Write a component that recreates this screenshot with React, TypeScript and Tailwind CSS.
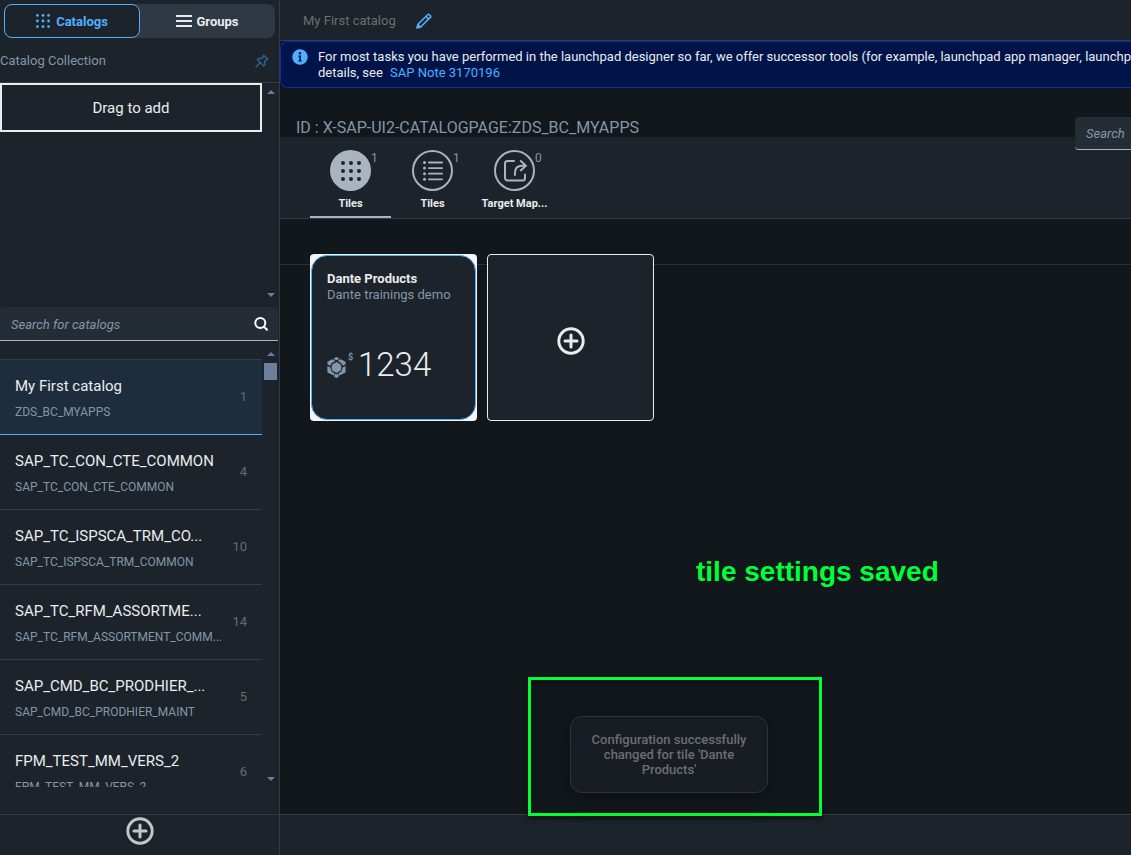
import React from "react";

type Catalog = { title: string; id: string; count: number };

const catalogs: Catalog[] = [
  { title: "My First catalog", id: "ZDS_BC_MYAPPS", count: 1 },
  { title: "SAP_TC_CON_CTE_COMMON", id: "SAP_TC_CON_CTE_COMMON", count: 4 },
  { title: "SAP_TC_ISPSCA_TRM_CO...", id: "SAP_TC_ISPSCA_TRM_COMMON", count: 10 },
  { title: "SAP_TC_RFM_ASSORTME...", id: "SAP_TC_RFM_ASSORTMENT_COMM...", count: 14 },
  { title: "SAP_CMD_BC_PRODHIER_...", id: "SAP_CMD_BC_PRODHIER_MAINT", count: 5 },
  { title: "FPM_TEST_MM_VERS_2", id: "FPM_TEST_MM_VERS_2", count: 6 },
];

const steps = [0, 1, 2];

function DotGrid({ className, r }: { className: string; r: number }) {
  return (
    <svg className={className} viewBox="0 0 20 20" fill="currentColor" aria-hidden="true">
      {steps.map((row) =>
        steps.map((col) => <circle key={`${row}${col}`} cx={2 + col * 8} cy={2 + row * 8} r={r} />)
      )}
    </svg>
  );
}

function ListIcon() {
  return (
    <svg className="size-5" viewBox="0 0 20 20" fill="currentColor" aria-hidden="true">
      {[0, 1, 2, 3].map((row) => (
        <g key={row}>
          <circle cx="1.5" cy={1.5 + row * 5.6} r="1.5" />
          <rect x="5" y={0.6 + row * 5.6} width="15" height="1.8" rx="0.9" />
        </g>
      ))}
    </svg>
  );
}

function ShareIcon() {
  return (
    <svg
      className="size-6"
      viewBox="0 0 24 24"
      fill="none"
      stroke="currentColor"
      strokeWidth="2"
      strokeLinecap="round"
      strokeLinejoin="round"
      aria-hidden="true"
    >
      <path d="M11 2H4.500a2.500 2.500 0 0 0-2.500 2.500v14.500a2.500 2.500 0 0 0 2.500 2.500h15a2.500 2.500 0 0 0 2.500-2.500v-3.500" />
      <path d="M17.800 2l5 4.700-5 4.700" />
      <path d="M22.500 6.700h-3.500c-4.500 0-7 2.800-7 7v2.300" />
    </svg>
  );
}

function PlusCircle({ className }: { className: string }) {
  return (
    <svg className={className} viewBox="0 0 28 28" fill="none" stroke="currentColor" aria-hidden="true">
      <circle cx="14" cy="14" r="12.200" strokeWidth="2.900" />
      <path d="M14 8v12M8 14h12" strokeWidth="3" strokeLinecap="round" />
    </svg>
  );
}

function PinIcon() {
  return (
    <svg
      className="size-3.5"
      viewBox="0 0 14 14"
      fill="none"
      stroke="currentColor"
      strokeWidth="1.500"
      strokeLinejoin="round"
      strokeLinecap="round"
      aria-hidden="true"
    >
      <path d="M8.600 1.200l4.200 4.200-1.300.5-2 2 .3 2.900-1.300 1L2.400 5.700l1-1.300 2.800.200 2-2z" />
      <path d="M5.300 8.700L1 13" />
    </svg>
  );
}

function PencilIcon() {
  return (
    <svg
      className="size-4"
      viewBox="0 0 16 16"
      fill="none"
      stroke="currentColor"
      strokeWidth="1.600"
      strokeLinejoin="round"
      aria-hidden="true"
    >
      <path d="M1.200 14.800l.8-3.500L11.900 1.500a.8.800 0 0 1 1.200 0l1.400 1.400a.8.800 0 0 1 0 1.200L4.700 14z" />
      <path d="M10 3.500l2.600 2.600" />
      <path d="M1.200 14.800l.8-3.300 2.500 2.500z" fill="currentColor" />
    </svg>
  );
}

function SearchIcon() {
  return (
    <svg className="size-3.5" viewBox="0 0 14 14" fill="none" stroke="currentColor" strokeWidth="2" aria-hidden="true">
      <circle cx="6.300" cy="6" r="5" />
      <path d="M9.900 9.600L13 12.800" strokeLinecap="round" />
    </svg>
  );
}

function CubeIcon() {
  return (
    <svg className="h-[21px] w-[19px]" viewBox="0 0 19 21" fill="currentColor" aria-hidden="true">
      <path d="M9.500 0l3.300 1.700-3.300 1.600-3.300-1.600z" />
      <path d="M5.200 2.200l3.300 1.900-3.700 2-1.400 2.600L.4 7.200V4.800z" />
      <path d="M13.800 2.200l-3.300 1.900 3.700 2 1.400 2.600 3-1.500V4.800z" />
      <path d="M9.500 5l4 2.300 1 3.200-1 3.200-4 2.300-4-2.300-1-3.200 1-3.200z" />
      <path d="M.4 9l3 1.600 1.200 3.900 2.800 1.700v2.600L.4 15.500z" />
      <path d="M18.600 9l-3 1.600-1.200 3.900-2.800 1.700v2.600l7-3.300z" />
      <path d="M8.300 16.800l1.200.7 1.200-.7 1.300 2.600L9.500 21 7 19.400z" />
    </svg>
  );
}

function Arrow({ down = false }: { down?: boolean }) {
  return (
    <svg className="h-1 w-2 text-[#6b7f9b]" viewBox="0 0 8 4" fill="currentColor" aria-hidden="true">
      <path d={down ? "M0 0h8L4 4z" : "M0 4h8L4 0z"} />
    </svg>
  );
}

function Sidebar() {
  return (
    <aside className="flex w-[280px] shrink-0 flex-col border-r border-[#333b45] bg-[#1d232a]">
      <div className="m-1 mb-0 flex h-[34px] rounded-lg bg-[#2f3943] text-[13px] font-bold">
        <button
          type="button"
          aria-pressed="true"
          className="flex w-[136px] items-center justify-center gap-1.5 rounded-lg border border-[#4db1ff] bg-[#1d232a] text-[#4db1ff]"
        >
          <DotGrid className="size-3.5" r={2} />
          <span className="pt-px">Catalogs</span>
        </button>
        <button type="button" aria-pressed="false" className="flex flex-1 items-center justify-center gap-1 text-[#eaecee]">
          <svg className="h-3 w-4" viewBox="0 0 16 12" fill="currentColor" aria-hidden="true">
            <path d="M0 0h16v2H0zM0 5h16v2H0zM0 10h16v2H0z" />
          </svg>
          <span className="pt-px">Groups</span>
        </button>
      </div>

      <div className="flex h-[45px] items-center justify-between border-b border-[#333b45] pt-0.5 pr-2.5">
        <h2 className="text-[13px] text-[#8396a8]">Catalog Collection</h2>
        <button type="button" aria-label="Pin" className="text-[#2f5f8a]">
          <PinIcon />
        </button>
      </div>

      <div className="flex h-[218px] shrink-0">
        <button
          type="button"
          className="h-[49px] w-[262px] border-2 border-[#eaecee] pt-0.5 text-[15px] text-[#eaecee]"
        >
          Drag to add
        </button>
        <div className="flex flex-1 flex-col items-center justify-between pt-[7px] pb-1">
          <Arrow />
          <Arrow down />
        </div>
      </div>

      <div className="mt-1.5 mr-px flex h-[34px] shrink-0 items-center rounded-t border-b border-[#a9b4be] bg-[#242d36] pr-2.5 pl-[11px]">
        <input
          type="text"
          aria-label="Search for catalogs"
          placeholder="Search for catalogs"
          className="min-w-0 flex-1 bg-transparent pt-0.5 text-[13px] italic outline-none placeholder:text-[#8396a8]"
        />
        <button type="button" aria-label="Search" className="text-white">
          <SearchIcon />
        </button>
      </div>

      <div className="mt-2.5 flex min-h-0 flex-1">
        <ul className="w-[262px] overflow-hidden pt-2">
          {catalogs.map((c, i) => (
            <li
              key={c.id}
              className={
                i === 0
                  ? "flex h-[76px] items-center border-t border-b border-t-[#333b45] border-b-[#4db1ff] bg-[#1d2d3e] px-[15px]"
                  : "flex h-[75px] items-center border-b border-[#333b45] px-[15px]"
              }
            >
              <div className="min-w-0 pt-0.5 whitespace-nowrap">
                <div className="text-[15px] leading-5 text-[#eaecee]">{c.title}</div>
                <div className="mt-2 text-[12px] leading-4 text-[#8396a8]">{c.id}</div>
              </div>
              <div className="flex-1 text-right text-[13px] text-[#666b70]">{c.count}</div>
            </li>
          ))}
        </ul>
        <div className="flex flex-1 flex-col items-center pt-px pb-1.5">
          <Arrow />
          <div className="mt-[7px] h-[17px] w-[13px] bg-[#6b7f9b]" />
          <div className="flex-1" />
          <Arrow down />
        </div>
      </div>

      <footer className="mt-[27px] flex h-[41px] shrink-0 justify-center border-t border-[#333b45] pt-0.5">
        <button type="button" aria-label="Add catalog" className="self-start text-[#c4c6c8]">
          <PlusCircle className="size-7" />
        </button>
      </footer>
    </aside>
  );
}

function Tab({
  label,
  count,
  selected = false,
  children,
}: {
  label: string;
  count: number;
  selected?: boolean;
  children: React.ReactNode;
}) {
  return (
    <button
      type="button"
      role="tab"
      aria-selected={selected}
      className={
        selected
          ? "flex w-[81px] flex-col items-center border-b-2 border-[#a9b4be] pt-[13px]"
          : "flex w-[81px] flex-col items-center border-b-2 border-transparent pt-[13px]"
      }
    >
      <span
        className={
          selected
            ? "relative flex size-[41px] items-center justify-center rounded-full border-2 border-[#a9b4be] bg-[#a9b4be] text-[#1d232a]"
            : "relative flex size-[41px] items-center justify-center rounded-full border-2 border-[#a9b4be] text-[#a9b4be]"
        }
      >
        {children}
        <span className="absolute -top-0.5 left-full ml-0.5 text-[12px] leading-4 text-[#8396a8]">{count}</span>
      </span>
      <span className="mt-[5px] text-[11px] leading-4 font-bold text-[#eaecee]">{label}</span>
    </button>
  );
}

export default function App() {
  return (
    <div className="relative flex h-screen overflow-hidden bg-[#12171c] font-['Roboto',sans-serif]">
      <Sidebar />

      <main className="flex min-w-0 flex-1 flex-col">
        <header className="flex h-[41px] shrink-0 items-center gap-5 border-b border-[#333b45] bg-[#1d232a] pt-px pl-[23px]">
          <h1 className="text-[13px] text-[#6c6e70]">My First catalog</h1>
          <button type="button" aria-label="Edit title" className="text-[#4db1ff]">
            <PencilIcon />
          </button>
        </header>

        <div className="flex h-[47px] shrink-0 gap-2.5 overflow-hidden rounded-l-lg border border-r-0 border-[#0032a5] bg-[#00144a] pt-[7px] pl-[11px] text-[13px] leading-4 text-[#eaecee]">
          <svg className="size-4 shrink-0" viewBox="0 0 16 16" aria-hidden="true">
            <circle cx="8" cy="8" r="7.700" fill="#4db1ff" />
            <circle cx="8" cy="4.300" r="1.200" fill="#00144a" />
            <path d="M6.300 6.600h2.700v4.800h1v1.200H6.300v-1.200h1V7.800h-1z" fill="#00144a" />
          </svg>
          <p className="whitespace-nowrap">
            For most tasks you have performed in the launchpad designer so far, we offer successor tools (for example,
            launchpad app manager, launchpad
            <br />
            details, see{" "}
            <a href="#note" className="ml-1 text-[#4db1ff]">
              SAP Note 3170196
            </a>
          </p>
        </div>

        <div className="flex h-[49px] shrink-0 items-start justify-between pl-4">
          <p className="mt-[30px] text-[16px] leading-5 text-[#8396a8]">ID : X-SAP-UI2-CATALOGPAGE:ZDS_BC_MYAPPS</p>
          <input
            type="text"
            aria-label="Search tiles"
            placeholder="Search"
            className="relative mt-[29px] h-[33px] w-14 rounded-l border-b border-[#a9b4be] bg-[#242d36] pl-[11px] text-[13px] italic outline-none placeholder:text-[#8396a8]"
          />
        </div>

        <div role="tablist" className="flex h-[82px] shrink-0 gap-px border-b border-[#333b45] bg-[#1d232a] pl-[30px]">
          <Tab label="Tiles" count={1} selected>
            <DotGrid className="size-5" r={2} />
          </Tab>
          <Tab label="Tiles" count={1}>
            <ListIcon />
          </Tab>
          <Tab label="Target Map..." count={0}>
            <ShareIcon />
          </Tab>
        </div>

        <div className="mt-[45px] flex-1 border-t border-[#2b333a]">
          <div className="-mt-[11px] flex gap-2.5 pl-[30px]">
            <article className="size-[167px] rounded bg-[#f5f6f7] p-px">
              <div className="flex h-full flex-col rounded-2xl border border-[#4db1ff] bg-[#1d232a] px-[15px] pt-[15px] pb-[38px]">
                <h3 className="text-[13px] leading-4 font-bold text-[#eaecee]">Dante Products</h3>
                <p className="text-[13px] leading-[15px] text-[#8396a8]">Dante trainings demo</p>
                <div className="mt-auto flex items-start text-[#8396a8]">
                  <span className="mt-2">
                    <CubeIcon />
                  </span>
                  <span className="w-2 pl-0.5 text-[9px] leading-4 font-bold">$</span>
                  <span className="ml-1 text-[33px] leading-8 font-light text-[#eaecee]">1234</span>
                </div>
              </div>
            </article>
            <button
              type="button"
              aria-label="Add tile"
              className="flex size-[167px] items-center justify-center rounded border border-[#eaecee] bg-[#1d232a] pt-1.5 text-[#eaecee]"
            >
              <PlusCircle className="size-7" />
            </button>
          </div>
        </div>

        <footer className="h-[41px] shrink-0 border-t border-[#333b45] bg-[#1d232a]" />
      </main>

      <p className="absolute top-[554px] left-[696px] font-['Liberation_Sans',Arial,sans-serif] text-[28px] leading-9 font-bold text-[#00ff37]">
        tile settings saved
      </p>
      <div className="absolute top-[677px] left-[528px] h-[139px] w-[294px] border-[3px] border-[#00ff37] shadow-[0_3px_5px_rgba(0,0,0,0.5),inset_0_3px_5px_rgba(0,0,0,0.4)]">
        <div
          role="status"
          className="mt-9 ml-[39px] flex h-[77px] w-[198px] items-center justify-center rounded-xl border border-[#303438] bg-[#181c23] px-4 text-center text-[13px] leading-[15px] font-medium text-[#6c6e70] shadow-[0_5px_20px_rgba(0,0,0,0.3)]"
        >
          Configuration successfully changed for tile 'Dante Products'
        </div>
      </div>
    </div>
  );
}
